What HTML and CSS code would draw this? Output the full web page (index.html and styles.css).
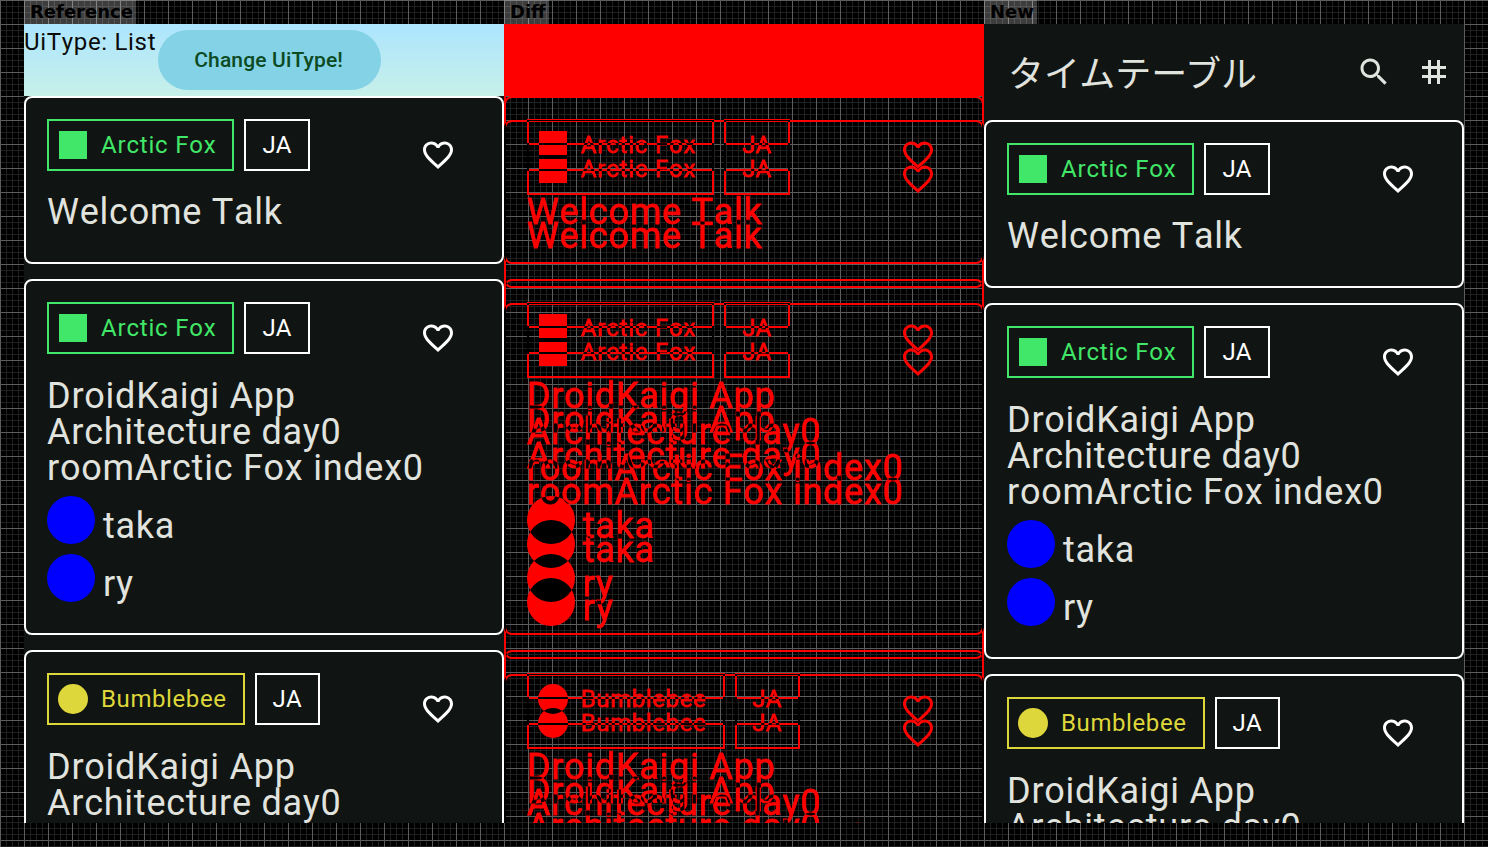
FILE: index.html
```html
<!DOCTYPE html>
<html lang="en">
<head>
<meta charset="utf-8">
<title>Roborazzi comparison</title>
<link rel="stylesheet" href="styles.css">
</head>
<body>
<svg class="defs" width="0" height="0" aria-hidden="true">
  <defs>
    <path id="i-heart" d="M16.5 3c-1.74 0-3.41.81-4.5 2.09C10.91 3.81 9.24 3 7.5 3 4.42 3 2 5.42 2 8.5c0 3.78 3.4 6.86 8.55 11.54L12 21.35l1.45-1.32C18.6 15.36 22 12.28 22 8.5 22 5.42 19.58 3 16.5 3zm-4.4 15.55l-.1.1-.1-.1C7.14 14.24 4 11.39 4 8.5 4 6.5 5.5 5 7.5 5c1.54 0 3.04.99 3.57 2.36h1.87C13.46 5.99 14.96 5 16.5 5c2 0 3.5 1.5 3.5 3.5 0 2.89-3.14 5.74-7.9 10.05z"/>
  </defs>
</svg>
<div class="labels">
  <div class="label-cell"><span class="label">Reference</span></div>
  <div class="label-cell"><span class="label">Diff</span></div>
  <div class="label-cell"><span class="label">New</span></div>
</div>
<main class="panels">
  <!-- Reference -->
  <section class="panel panel-dark">
    <div class="old-bar">
      <span class="ui-type">UiType: List</span>
      <button class="change-btn">Change UiType!</button>
    </div>
    <div class="list">
      <article class="card">
        <div class="card-head">
          <span class="chip chip-fox"><i class="room-icon square"></i>Arctic Fox</span>
          <span class="chip">JA</span>
          <span class="fav"><svg viewBox="0 0 24 24"><use href="#i-heart"/></svg></span>
        </div>
        <h3 class="title">Welcome Talk</h3>
      </article>
      <article class="card">
        <div class="card-head">
          <span class="chip chip-fox"><i class="room-icon square"></i>Arctic Fox</span>
          <span class="chip">JA</span>
          <span class="fav"><svg viewBox="0 0 24 24"><use href="#i-heart"/></svg></span>
        </div>
        <h3 class="title">DroidKaigi App<br>Architecture day0<br>roomArctic Fox index0</h3>
        <div class="speakers">
          <div class="speaker"><i class="avatar"></i><span class="speaker-name">taka</span></div>
          <div class="speaker"><i class="avatar"></i><span class="speaker-name">ry</span></div>
        </div>
      </article>
      <article class="card">
        <div class="card-head">
          <span class="chip chip-bee"><i class="room-icon circle"></i>Bumblebee</span>
          <span class="chip">JA</span>
          <span class="fav"><svg viewBox="0 0 24 24"><use href="#i-heart"/></svg></span>
        </div>
        <h3 class="title">DroidKaigi App<br>Architecture day0<br>roomBumblebee index0</h3>
      </article>
    </div>
  </section>

  <!-- Diff -->
  <section class="panel panel-diff">
    <div class="diff-layer">
      <div class="old-bar-diff"></div>
      <div class="list">
        <article class="card">
          <div class="card-head">
            <span class="chip chip-fox"><i class="room-icon square"></i>Arctic Fox</span>
            <span class="chip">JA</span>
            <span class="fav"><svg viewBox="0 0 24 24"><use href="#i-heart"/></svg></span>
          </div>
          <h3 class="title">Welcome Talk</h3>
        </article>
        <article class="card">
          <div class="card-head">
            <span class="chip chip-fox"><i class="room-icon square"></i>Arctic Fox</span>
            <span class="chip">JA</span>
            <span class="fav"><svg viewBox="0 0 24 24"><use href="#i-heart"/></svg></span>
          </div>
          <h3 class="title">DroidKaigi App<br>Architecture day0<br>roomArctic Fox index0</h3>
          <div class="speakers">
            <div class="speaker"><i class="avatar"></i><span class="speaker-name">taka</span></div>
            <div class="speaker"><i class="avatar"></i><span class="speaker-name">ry</span></div>
          </div>
        </article>
        <article class="card">
          <div class="card-head">
            <span class="chip chip-bee"><i class="room-icon circle"></i>Bumblebee</span>
            <span class="chip">JA</span>
            <span class="fav"><svg viewBox="0 0 24 24"><use href="#i-heart"/></svg></span>
          </div>
          <h3 class="title">DroidKaigi App<br>Architecture day0<br>roomBumblebee index0</h3>
        </article>
      </div>
    </div>
    <div class="diff-layer">
      <div class="new-bar-spacer"></div>
      <div class="list">
        <article class="card">
          <div class="card-head">
            <span class="chip chip-fox"><i class="room-icon square"></i>Arctic Fox</span>
            <span class="chip">JA</span>
            <span class="fav"><svg viewBox="0 0 24 24"><use href="#i-heart"/></svg></span>
          </div>
          <h3 class="title">Welcome Talk</h3>
        </article>
        <article class="card">
          <div class="card-head">
            <span class="chip chip-fox"><i class="room-icon square"></i>Arctic Fox</span>
            <span class="chip">JA</span>
            <span class="fav"><svg viewBox="0 0 24 24"><use href="#i-heart"/></svg></span>
          </div>
          <h3 class="title">DroidKaigi App<br>Architecture day0<br>roomArctic Fox index0</h3>
          <div class="speakers">
            <div class="speaker"><i class="avatar"></i><span class="speaker-name">taka</span></div>
            <div class="speaker"><i class="avatar"></i><span class="speaker-name">ry</span></div>
          </div>
        </article>
        <article class="card">
          <div class="card-head">
            <span class="chip chip-bee"><i class="room-icon circle"></i>Bumblebee</span>
            <span class="chip">JA</span>
            <span class="fav"><svg viewBox="0 0 24 24"><use href="#i-heart"/></svg></span>
          </div>
          <h3 class="title">DroidKaigi App<br>Architecture day0<br>roomBumblebee index0</h3>
        </article>
      </div>
    </div>
    <div class="diff-sides"></div>
  </section>

  <!-- New -->
  <section class="panel panel-dark">
    <header class="new-bar">
      <h1 class="screen-title">タイムテーブル</h1>
      <span class="bar-btn"><svg viewBox="0 0 24 24"><path d="M15.5 14h-.79l-.28-.27C15.41 12.59 16 11.11 16 9.5 16 5.91 13.09 3 9.5 3S3 5.91 3 9.5 5.91 16 9.5 16c1.61 0 3.09-.59 4.23-1.57l.27.28v.79l5 4.99L20.49 19l-4.99-5zm-6 0C7.01 14 5 11.99 5 9.5S7.01 5 9.5 5 14 7.01 14 9.5 11.99 14 9.5 14z"/></svg></span>
      <span class="bar-btn"><svg viewBox="0 0 24 24"><path d="M20 10V8h-4V4h-2v4h-4V4H8v4H4v2h4v4H4v2h4v4h2v-4h4v4h2v-4h4v-2h-4v-4h4zm-6 4h-4v-4h4v4z"/></svg></span>
    </header>
    <div class="list">
      <article class="card">
        <div class="card-head">
          <span class="chip chip-fox"><i class="room-icon square"></i>Arctic Fox</span>
          <span class="chip">JA</span>
          <span class="fav"><svg viewBox="0 0 24 24"><use href="#i-heart"/></svg></span>
        </div>
        <h3 class="title">Welcome Talk</h3>
      </article>
      <article class="card">
        <div class="card-head">
          <span class="chip chip-fox"><i class="room-icon square"></i>Arctic Fox</span>
          <span class="chip">JA</span>
          <span class="fav"><svg viewBox="0 0 24 24"><use href="#i-heart"/></svg></span>
        </div>
        <h3 class="title">DroidKaigi App<br>Architecture day0<br>roomArctic Fox index0</h3>
        <div class="speakers">
          <div class="speaker"><i class="avatar"></i><span class="speaker-name">taka</span></div>
          <div class="speaker"><i class="avatar"></i><span class="speaker-name">ry</span></div>
        </div>
      </article>
      <article class="card">
        <div class="card-head">
          <span class="chip chip-bee"><i class="room-icon circle"></i>Bumblebee</span>
          <span class="chip">JA</span>
          <span class="fav"><svg viewBox="0 0 24 24"><use href="#i-heart"/></svg></span>
        </div>
        <h3 class="title">DroidKaigi App<br>Architecture day0<br>roomBumblebee index0</h3>
      </article>
    </div>
  </section>
</main>
</body>
</html>
```
FILE: styles.css
```css
* { box-sizing: border-box; }

html, body { height: 100%; }

body {
  margin: 0;
  overflow: hidden;
  background-color: #000;
  background-image:
    linear-gradient(to right, #5c5c5c 1px, transparent 1px),
    linear-gradient(to bottom, #5c5c5c 1px, transparent 1px),
    linear-gradient(to right, #202020 1px, transparent 1px),
    linear-gradient(to bottom, #202020 1px, transparent 1px);
  background-size: 24px 24px, 24px 24px, 6px 6px, 6px 6px;
  font-family: Roboto, "Noto Sans CJK JP", sans-serif;
  font-kerning: none;
}

.defs { display: block; height: 0; }

.labels {
  display: grid;
  grid-template-columns: repeat(3, 480px);
  height: 24px;
  padding-left: 24px;
}

.label {
  display: inline-block;
  height: 24px;
  padding: 0 3px 0 6px;
  background: rgba(255, 255, 255, 0.24);
  color: #000;
  font: bold 18px/23px "DejaVu Sans", sans-serif;
}

.panels {
  display: grid;
  grid-template-columns: repeat(3, 480px);
  height: 799px;
  margin: 0 24px;
  overflow: hidden;
}

.panel { height: 799px; overflow: hidden; }
.panel-dark { background: #101412; }

/* reference top bar */
.old-bar {
  display: flex;
  align-items: flex-start;
  height: 72px;
  background: linear-gradient(to bottom, #ade5ff, #c7f0e8);
}

.ui-type {
  color: #0a0a0a;
  font-size: 24px;
  line-height: 36px;
  letter-spacing: 0.68px;
}

.change-btn {
  height: 60px;
  margin: 6px 0 0 2px;
  padding: 0 38px 0 36px;
  border: 0;
  border-radius: 30px;
  background: #83d2e6;
  color: #0c4a22;
  font: 500 21px Roboto, sans-serif;
  letter-spacing: 0.15px;
}

/* new top bar */
.new-bar {
  display: flex;
  align-items: center;
  height: 96px;
  padding-left: 24px;
}

.screen-title {
  flex: 1;
  margin: 0 0 3px;
  color: #e1e3df;
  font: 400 36px/54px "Noto Sans CJK JP", sans-serif;
}

.bar-btn {
  display: flex;
  align-items: center;
  justify-content: center;
  width: 60px;
  height: 60px;
}

.bar-btn svg { width: 36px; height: 36px; fill: #e1e3df; }

/* session cards */
.list { display: flex; flex-direction: column; gap: 15px; }

.card {
  flex: none;
  padding: 21px 28px 31px 21px;
  border: 2px solid #fff;
  border-radius: 8px;
  color: #e1e3df;
}

.card-head { display: flex; align-items: flex-start; gap: 10px; height: 72px; }

.chip {
  display: flex;
  align-items: center;
  height: 52px;
  padding: 0 16px;
  border: 2px solid #fff;
  color: #fff;
  font-size: 24px;
  letter-spacing: 0.2px;
}

.chip-fox { padding-left: 9px; border-color: #41e768; color: #41e768; letter-spacing: 0.8px; }
.chip-bee { padding-left: 9px; border-color: #ded73b; color: #ded73b; letter-spacing: 0.6px; }

.room-icon { flex: none; width: 30px; height: 30px; margin-right: 13px; }
.square { border: 1px solid #101412; background: #41e768 content-box; }
.circle { border-radius: 50%; background: #ded73b; }

.fav {
  display: flex;
  align-items: center;
  justify-content: center;
  width: 72px;
  height: 72px;
  margin-left: auto;
}

.fav svg { width: 36px; height: 36px; fill: #fff; }

.title {
  margin: 0 0 1px;
  padding-top: 3px;
  font-size: 36px;
  font-weight: 400;
  line-height: 36px;
  letter-spacing: 0.75px;
}

.card + .card .title { margin-bottom: 0; padding-top: 4px; }

.speakers { display: flex; flex-direction: column; gap: 10px; margin-top: 10px; }

.speaker {
  display: flex;
  align-items: flex-start;
  gap: 8px;
  font-size: 36px;
  letter-spacing: 0.75px;
}

.speaker-name { height: 48px; padding-top: 12px; line-height: 36px; }

.avatar { flex: none; width: 48px; height: 48px; border-radius: 50%; background: #00f; }

/* diff panel: two red copies, where the overlap cancels out */
.panel-diff {
  display: grid;
  isolation: isolate;
}

.diff-layer { grid-area: 1 / 1; min-width: 0; }
.diff-layer + .diff-layer { mix-blend-mode: difference; }

.old-bar-diff { height: 72px; background: #f00; }
.new-bar-spacer { height: 96px; }

.panel-diff .card { border-color: #f00; color: #f00; }
.panel-diff .chip { border-color: #f00; color: #f00; }
.panel-diff .square { border-color: transparent; background: #f00 content-box; }
.panel-diff .circle { background: #f00; }
.panel-diff .fav svg { fill: #f00; }
.panel-diff .avatar { background: #f00; }
.panel-diff .title,
.panel-diff .speaker,
.panel-diff .chip { -webkit-text-stroke: 0.8px #f00; }

/* side edges of the cards where only one of the two lists has a border */
.diff-sides {
  grid-area: 1 / 1;
  z-index: 1;
  margin-top: 72px;
  background-image:
    linear-gradient(to bottom, #f00 24px, transparent 24px, transparent 168px, #f00 168px, #f00 207px, transparent 207px, transparent 539px, #f00 539px, #f00 578px, transparent 578px),
    linear-gradient(to bottom, #f00 24px, transparent 24px, transparent 168px, #f00 168px, #f00 207px, transparent 207px, transparent 539px, #f00 539px, #f00 578px, transparent 578px);
  background-position: left top, right top;
  background-repeat: no-repeat;
  background-size: 2px 100%;
}
```
